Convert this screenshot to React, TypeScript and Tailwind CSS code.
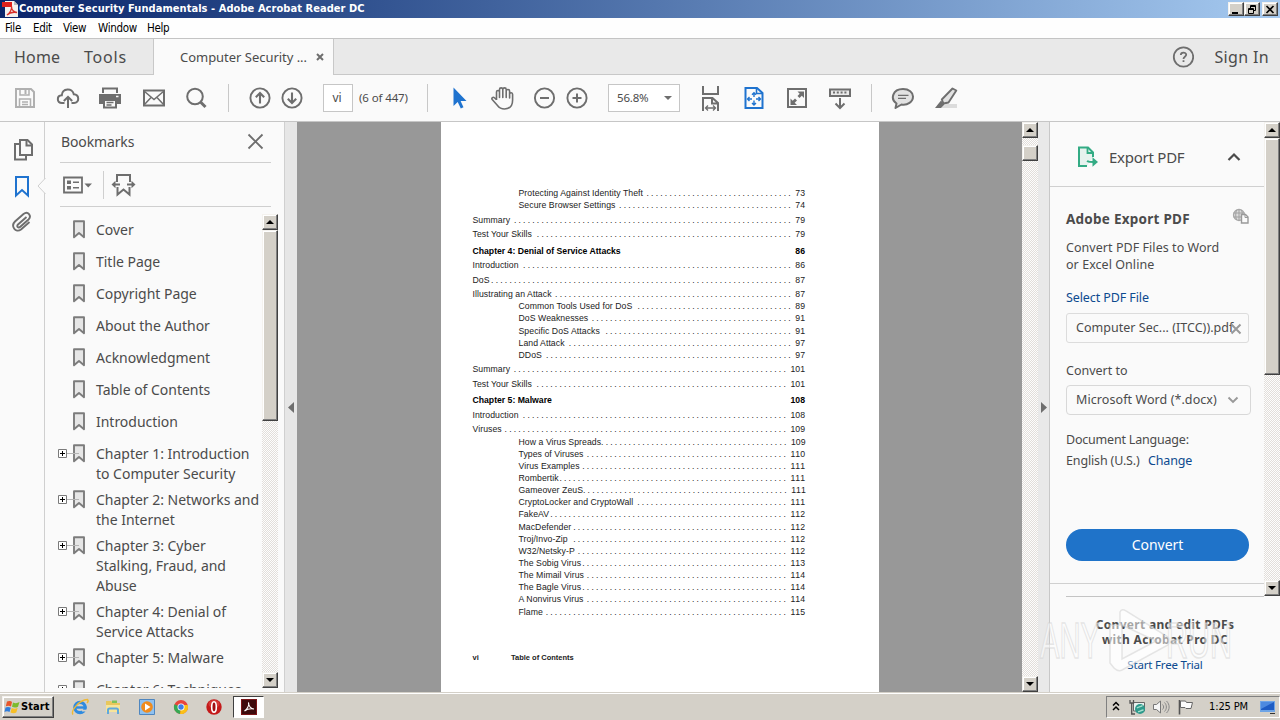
import type { ReactNode } from "react";

const INK = "#6e6e6e";

function Icon({ children, className = "", w = 24, h = 24 }: { children: ReactNode; className?: string; w?: number; h?: number }) {
  return (
    <svg width={w} height={h} viewBox={`0 0 ${w} ${h}`} fill="none" className={`shrink-0 ${className}`}>
      {children}
    </svg>
  );
}

/* ---------- Classic scrollbar ---------- */
const TRACK = "bg-[#f1efec] bg-[repeating-conic-gradient(#e2deda_0_25%,#fdfdfd_0_50%)] bg-[length:2px_2px]";
const RAISED = "bg-[#d4d0c8] border border-t-[#f4f2ee] border-l-[#f4f2ee] border-r-[#404040] border-b-[#404040] shadow-[inset_-1px_-1px_0_#808080,inset_1px_1px_0_#ffffff]";

function ScrollButton({ up = false }: { up?: boolean }) {
  return (
    <div className={`flex h-4 w-4 shrink-0 items-center justify-center ${RAISED}`}>
      <Icon w={8} h={4}>
        <path d={up ? "M0 4L4 0L8 4Z" : "M0 0L4 4L8 0Z"} fill="#000" />
      </Icon>
    </div>
  );
}

function Scrollbar({ thumb, className = "" }: { thumb: string; className?: string }) {
  return (
    <div className={`flex w-4 shrink-0 flex-col ${TRACK} ${className}`}>
      <ScrollButton up />
      <div className={`w-4 shrink-0 ${RAISED} ${thumb}`} />
      <div className="flex-1" />
      <ScrollButton />
    </div>
  );
}

/* ---------- Title, menu, tabs ---------- */
function WindowButton({ children, className = "" }: { children: ReactNode; className?: string }) {
  return (
    <div className={`flex h-[14px] w-4 items-center justify-center ${RAISED} ${className}`}>
      <Icon w={10} h={9}>{children}</Icon>
    </div>
  );
}

function TitleBar() {
  return (
    <div className="flex h-[18px] items-center bg-linear-to-r from-[#0a246a] to-[#a6caf0] pr-[2px] pl-[2px]">
      <Icon w={16} h={16}>
        <path d="M3 0H12L16 4V16H3Z" fill="#f3f0ee" />
        <path d="M12 0L16 4H12Z" fill="#b9b9b9" />
        <path d="M0 1H10V6H0Z" fill="#e0201b" />
        <path d="M5 14C8 12 10 8 9.500 5.500C9.500 9 12 11.500 15 11.500C11 10.800 7.500 11.500 5 14Z" stroke="#d9302a" strokeWidth="1.300" />
      </Icon>
      <span className="ml-px pt-px font-['DejaVu_Sans_Condensed','DejaVu_Sans',sans-serif] text-[11px] font-bold tracking-[0.06px] whitespace-nowrap text-white">
        Computer Security Fundamentals - Adobe Acrobat Reader DC
      </span>
      <div className="ml-auto flex">
        <WindowButton><path d="M1 7H7V9H1Z" fill="#000" /></WindowButton>
        <WindowButton>
          <path d="M3.500 3V0.500H8.500V5.500H6.500M3 1.500H9M1.500 3.500H6.500V8.500H1.500ZM1 4.500H7" stroke="#000" />
        </WindowButton>
        <WindowButton className="ml-[2px]"><path d="M1.500 1L8.500 8M8.500 1L1.500 8" stroke="#000" strokeWidth="1.700" /></WindowButton>
      </div>
    </div>
  );
}

function MenuBar() {
  return (
    <div className="flex h-5 items-center bg-[#fefefe] pt-px pl-[5px] font-['DejaVu_Sans_Condensed','DejaVu_Sans',sans-serif] text-[11.500px] tracking-[-0.32px] text-black">
      <span className="w-[28px]">File</span>
      <span className="w-[30px]">Edit</span>
      <span className="w-[35px]">View</span>
      <span className="w-[49px]">Window</span>
      <span>Help</span>
    </div>
  );
}

function TabBar() {
  return (
    <div className="flex h-[37px] border-t border-[#c4c4c4] bg-[#e9e9e9] text-[#4b4b4b]">
      <div className="flex w-[154px] items-center border-r border-b border-[#c8c8c8] pl-[14px] text-base">
        <span className="w-[70px] tracking-[0.2px]">Home</span>
        <span className="tracking-[0.8px]">Tools</span>
      </div>
      <div className="flex w-[180px] items-center border-r border-[#c8c8c8] bg-[#fafafa] pl-[26px]">
        <span className="w-[136px] pt-px text-[13px] tracking-[-0.03px] whitespace-nowrap">Computer Security ...</span>
        <Icon w={8} h={8}><path d="M1 1L7 7M7 1L1 7" stroke={INK} strokeWidth="2" /></Icon>
      </div>
      <div className="flex flex-1 items-center justify-end border-b border-[#c8c8c8] pr-[11px]">
        <Icon w={22} h={22}>
          <circle cx="11.500" cy="11" r="9.700" stroke={INK} strokeWidth="1.800" />
          <path d="M8.800 9C8.800 5.800 14.200 5.800 14.200 8.800C14.200 10.700 11.500 10.900 11.500 12.900M11.500 14.300V16" stroke={INK} strokeWidth="1.800" />
        </Icon>
        <span className="ml-5 text-base tracking-[0.35px] whitespace-nowrap">Sign In</span>
      </div>
    </div>
  );
}

/* ---------- Toolbar ---------- */
const Sep = ({ className }: { className: string }) => <div className={`h-7 w-px shrink-0 bg-[#c8c8c8] ${className}`} />;

function Toolbar() {
  return (
    <div className="flex h-[47px] items-center border-b border-[#c6c6c6] bg-[#fafafa] text-[#4b4b4b]">
      <Icon className="ml-[13px]">
        <path d="M3 3H18L21 6V21H3Z" stroke="#b0b0b0" strokeWidth="2" />
        <path d="M7 3V9H16V3M6.500 21V13H17.500V21M9 16H15M9 18.500H15" stroke="#b0b0b0" strokeWidth="1.500" />
        <path d="M12.500 4V8" stroke="#b0b0b0" strokeWidth="2" />
      </Icon>
      <Icon className="ml-[19px]">
        <path d="M8.500 17H6C0.500 17 0.500 9.500 5.800 9.300C6.300 1.800 16.500 1.500 17.800 8.300C23.500 8.500 23.800 17 18 17H15.500" stroke={INK} strokeWidth="2" />
        <path d="M12 22V11.500M7.800 15L12 11L16.200 15" stroke={INK} strokeWidth="2" />
      </Icon>
      <Icon className="ml-[18px]">
        <path d="M4 1.500H20V7H4Z" fill={INK} /><path d="M6 3.500H18V7H6Z" fill="#fafafa" />
        <path d="M1 8H23V18H19V14H5V18H1Z" fill={INK} />
        <path d="M6 14H18V21.500H6Z" fill="#fafafa" stroke={INK} strokeWidth="2" />
        <path d="M8.500 16.500H15.500M8.500 19H13.500" stroke={INK} strokeWidth="1.300" />
        <path d="M18 10.500H20.500" stroke="#fafafa" strokeWidth="1.500" />
      </Icon>
      <Icon className="ml-[20px]">
        <path d="M2 4.500H22V19.500H2Z" stroke={INK} strokeWidth="2" />
        <path d="M2 5L12 13.500L22 5M2 19L9 11.500M22 19L15 11.500" stroke={INK} strokeWidth="1.500" />
      </Icon>
      <Icon className="ml-[18px]">
        <circle cx="11" cy="10.500" r="7.800" stroke={INK} strokeWidth="2" />
        <path d="M16.500 16L21.500 21" stroke={INK} strokeWidth="3" />
      </Icon>
      <Sep className="ml-[20px]" />
      <Icon className="ml-[19px]">
        <circle cx="12" cy="12" r="9.600" stroke={INK} strokeWidth="1.900" />
        <path d="M12 17.500V7.500M7.800 11.200L12 7L16.200 11.200" stroke={INK} strokeWidth="2.100" />
      </Icon>
      <Icon className="ml-[8px]">
        <circle cx="12" cy="12" r="9.600" stroke={INK} strokeWidth="1.900" />
        <path d="M12 6.500V16.500M7.800 12.800L12 17L16.200 12.800" stroke={INK} strokeWidth="2.100" />
      </Icon>
      <div className="ml-[19px] flex h-[28px] w-[30px] shrink-0 items-center justify-center border border-[#c6c6c6] bg-white pr-[2px] text-[12px]">vi</div>
      <span className="ml-[6px] w-[50px] shrink-0 text-[11.500px] tracking-[-0.12px] whitespace-nowrap">(6 of 447)</span>
      <Sep className="ml-[18px]" />
      <Icon className="ml-[20px]"><path d="M5.500 1.500V20L9.700 16L12.800 22.500L15.500 21.300L12.600 15H18.500Z" fill="#1f73cf" /></Icon>
      <Icon className="ml-[18px]">
        <path d="M6.500 14V6C6.500 4 9.500 4 9.500 6V11.500V3.500C9.500 1.300 12.800 1.300 12.800 3.500V11.500V3.500C12.800 1.300 16.200 1.300 16.200 3.500V11.500V5C16.200 3 19.600 3 19.600 5V12V8C20 6.300 22.600 6.300 22.600 8.500V14C22.600 20 20 23 14.500 23C10.500 23 9 21.500 7.500 19.500L2.200 13.500C1.200 11.800 3 10.500 4.700 12L6.500 13.800" stroke={INK} strokeWidth="1.600" strokeLinejoin="round" />
      </Icon>
      <Icon className="ml-[18px]">
        <circle cx="12.500" cy="12" r="9.600" stroke={INK} strokeWidth="1.900" /><path d="M8 12H17" stroke={INK} strokeWidth="2" />
      </Icon>
      <Icon className="ml-[9px]">
        <circle cx="12" cy="12" r="9.600" stroke={INK} strokeWidth="1.900" /><path d="M7.500 12H16.500M12 7.500V16.500" stroke={INK} strokeWidth="2" />
      </Icon>
      <div className="ml-[19px] flex h-[28px] w-[72px] shrink-0 items-center justify-between border border-[#c6c6c6] bg-white pr-[7px] pl-[8px]">
        <span className="text-[11.500px] tracking-[-0.2px]">56.8%</span>
        <Icon w={8} h={4}><path d="M0 0H8L4 4Z" fill={INK} /></Icon>
      </div>
      <Icon className="ml-[19px]" h={26}>
        <path d="M4 1V9H19V1" stroke={INK} strokeWidth="2" />
        <path d="M4 26V13H13.500L19 18V26M13 13V18.500H19" stroke={INK} strokeWidth="2" />
        <path d="M6.500 23H16.500M9 20.500L6.500 23L9 25.500M14 20.500L16.500 23L14 25.500" stroke={INK} strokeWidth="1.300" />
      </Icon>
      <Icon className="ml-[19px]">
        <path d="M3.500 2H15L20.500 7V22H3.500Z" stroke="#1f73cf" strokeWidth="2" />
        <path d="M14.500 2V7.500H20.500" stroke="#1f73cf" strokeWidth="1.600" />
        <path d="M12 7V11M12 14.500V18.500M5.500 13H10M14 13H18.500M10 8.800L12 6.800L14 8.800M10 17L12 19L14 17M7.500 11L5.500 13L7.500 15M16.500 11L18.500 13L16.500 15" stroke="#1f73cf" strokeWidth="1.400" />
      </Icon>
      <Icon className="ml-[19px]">
        <path d="M3 3H21V21H3Z" stroke={INK} strokeWidth="2" />
        <path d="M12.500 5.500H19V12L16.800 9.800L14.500 12L12.500 10L14.700 7.700ZM5.500 12.500L7.700 14.700L10 12.500L12 14.500L9.700 16.800L12 19H5.500Z" fill={INK} />
      </Icon>
      <Icon className="ml-[19px]">
        <path d="M2 3.500H22V10H2Z" fill="#e8e8e8" stroke={INK} strokeWidth="2" />
        <path d="M5 6.500H19" stroke={INK} strokeWidth="2" strokeDasharray="2 1.800" />
        <path d="M12 12V22M7.500 17.500L12 22L16.500 17.500" stroke={INK} strokeWidth="2" />
      </Icon>
      <Sep className="ml-[19px]" />
      <Icon className="ml-[19px]">
        <path d="M5.500 17.500C-1 13 1.500 3 12 3C18 3 22 6.500 22 10.500C22 16 16.500 19.500 10.500 18.500L4.500 22Z" fill="#e2e2e2" stroke={INK} strokeWidth="2" strokeLinejoin="round" />
        <path d="M7 9.300H17.500M7 12.300H15" stroke={INK} strokeWidth="1.300" />
      </Icon>
      <Icon className="ml-[19px]">
        <path d="M12 18H23V22H7Z" fill="#dcdcdc" />
        <path d="M18.500 2.500L22.300 4.500L14.500 16.500L9.500 17.500L7.800 13.500Z" fill="#e2e2e2" stroke={INK} strokeWidth="1.900" strokeLinejoin="round" />
        <path d="M7 14.500L10.500 18.500L7 22H1Z" fill={INK} />
      </Icon>
    </div>
  );
}

/* ---------- Bookmarks ---------- */
type Bookmark = { lines: string[]; branch?: boolean };
const BOOKMARKS: Bookmark[] = [
  { lines: ["Cover"] },
  { lines: ["Title Page"] },
  { lines: ["Copyright Page"] },
  { lines: ["About the Author"] },
  { lines: ["Acknowledgment"] },
  { lines: ["Table of Contents"] },
  { lines: ["Introduction"] },
  { lines: ["Chapter 1: Introduction", "to Computer Security"], branch: true },
  { lines: ["Chapter 2: Networks and", "the Internet"], branch: true },
  { lines: ["Chapter 3: Cyber", "Stalking, Fraud, and", "Abuse"], branch: true },
  { lines: ["Chapter 4: Denial of", "Service Attacks"], branch: true },
  { lines: ["Chapter 5: Malware"], branch: true },
  { lines: ["Chapter 6: Techniques"], branch: true },
];

function BookmarkRow({ lines, branch }: Bookmark) {
  return (
    <div className="flex min-h-8 shrink-0 pt-[3px] pb-[3px] pl-[12px]">
      <Icon w={28} h={20}>
        {branch && (
          <>
            <path d="M10 9.500H20" stroke="#b5b5b5" />
            <path d="M1.500 5.500H9.500V13.500H1.500Z" fill="#fff" stroke="#7a7a7a" />
            <path d="M3 9.500H8M5.500 7V12" stroke="#000" />
          </>
        )}
        <path d="M17 1.300H27V17.300L22 13L17 17.300Z" fill="#e6e6e6" stroke="#7c7c7c" strokeWidth="1.900" strokeLinejoin="round" />
        {branch && <path d="M16 9.500H22" stroke="#b5b5b5" />}
      </Icon>
      <div className="ml-[11px] text-[14px] leading-5 tracking-[-0.02px] whitespace-nowrap">
        {lines.map((l) => <div key={l}>{l}</div>)}
      </div>
    </div>
  );
}

function LeftRail() {
  return (
    <div className="flex w-[45px] shrink-0 flex-col border-r border-[#cfcfcf] bg-[#fafafa]">
      <Icon w={24} h={24} className="mt-[16px] ml-[12px]">
        <path d="M8 2H15.500L20 6.500V17H8Z" stroke={INK} strokeWidth="2" />
        <path d="M14.500 2V7.500H20M8 6H3V21.500H14V18" stroke={INK} strokeWidth="2" />
      </Icon>
      <div className="mt-[12px] flex h-6 items-center pl-[12px]">
        <Icon><path d="M4 3H16V21.500L10 16L4 21.500Z" stroke="#1f73cf" strokeWidth="2" /></Icon>
        <Icon w={9} h={16} className="relative left-px"><path d="M8.500 0L1 8L8.500 16" fill="#fafafa" stroke="#cfcfcf" /></Icon>
      </div>
      <Icon className="mt-[12px] ml-[10px]">
        <path d="M16.500 7L8 14.500C6 16.500 8.500 18.500 10.300 16.800L18.500 9.500C22 6 18 0.500 13.500 4L5 11.500C0.500 16 5.500 23.500 11 19.500L19.500 12" stroke={INK} strokeWidth="1.900" />
      </Icon>
    </div>
  );
}

function BookmarksPanel() {
  return (
    <div className="flex w-[239px] shrink-0 flex-col bg-[#fafafa] text-[#4b4b4b]">
      <div className="mr-[13px] ml-[15px] flex h-[41px] shrink-0 items-center justify-between border-b border-[#cfcfcf] pr-[7px] pb-[2px] pl-px">
        <span className="text-[14px] tracking-[-0.13px]">Bookmarks</span>
        <Icon w={17} h={17}><path d="M1.500 1.500L15.500 15.500M15.500 1.500L1.500 15.500" stroke={INK} strokeWidth="1.800" /></Icon>
      </div>
      <div className="mr-[13px] ml-[15px] flex h-[44px] shrink-0 items-center border-b border-[#cfcfcf]">
        <Icon w={34} h={20} className="ml-[2px]">
          <path d="M2 2.500H20V17.500H2Z" stroke={INK} strokeWidth="1.800" />
          <path d="M5 5.500H9V9H5ZM5 11H9V14.500H5Z" fill={INK} />
          <path d="M11 7.300H17M11 12.700H17" stroke={INK} strokeWidth="1.600" />
          <path d="M22.500 8.500H30L26.200 12.500Z" fill={INK} />
        </Icon>
        <div className="ml-[7px] h-7 w-px bg-[#cfcfcf]" />
        <Icon className="ml-[7px]" w={25} h={24}>
          <path d="M6 9V2H19V9M6.500 14V21.500L12.500 16.500L18.500 21.500V14" stroke={INK} strokeWidth="2" />
          <path d="M2 11.500H9M16 11.500H23" stroke={INK} strokeWidth="2" />
          <path d="M0.500 11.500L4.500 7.800V15.200ZM24.500 11.500L20.500 7.800V15.200Z" fill={INK} />
        </Icon>
      </div>
      <div className="mt-[7px] mb-[4px] flex min-h-0 flex-1">
        <div className="flex w-[217px] flex-col overflow-hidden pt-[3px]">
          {BOOKMARKS.map((b) => <BookmarkRow key={b.lines[0]} {...b} />)}
        </div>
        <Scrollbar thumb="h-[191px]" />
      </div>
    </div>
  );
}

/* ---------- Document ---------- */
type Entry = { gap: string; text: string; page: string; start?: number; sub?: boolean };
const e = (gap: string, text: string, page: string, start?: number, sub = false): Entry => ({ gap, text, page, start, sub });
const ENTRIES: Entry[] = [
  e("mt-0", "Protecting Against Identity Theft", "73", 647, true),
  e("mt-0", "Secure Browser Settings", "74", 619, true),
  e("mt-[3px]", "Summary", "79", 514),
  e("mt-[2px]", "Test Your Skills", "79", 537),
  e("mt-[5px]", "Chapter 4: Denial of Service Attacks", "86"),
  e("mt-[2px]", "Introduction", "86", 523),
  e("mt-[3px]", "DoS", "87", 491),
  e("mt-[2px]", "Illustrating an Attack", "87", 555),
  e("mt-0", "Common Tools Used for DoS", "89", 638, true),
  e("mt-0", "DoS Weaknesses", "91", 592, true),
  e("mt-px", "Specific DoS Attacks", "91", 605.500, true),
  e("mt-0", "Land Attack", "97", 569, true),
  e("mt-0", "DDoS", "97", 546, true),
  e("mt-[2px]", "Summary", "101", 514),
  e("mt-[3px]", "Test Your Skills", "101", 537),
  e("mt-[4px]", "Chapter 5: Malware", "108"),
  e("mt-[3px]", "Introduction", "108", 523),
  e("mt-[2px]", "Viruses", "109", 505),
  e("mt-px", "How a Virus Spreads", "109", 601, true),
  e("mt-0", "Types of Viruses", "110", 587, true),
  e("mt-0", "Virus Examples", "111", 583, true),
  e("mt-0", "Rombertik", "111", 560, true),
  e("mt-0", "Gameover ZeuS", "111", 583, true),
  e("mt-0", "CryptoLocker and CryptoWall", "111", 638, true),
  e("mt-0", "FakeAV", "112", 550.500, true),
  e("mt-px", "MacDefender", "112", 573.500, true),
  e("mt-0", "Troj/Invo-Zip", "112", 573.500, true),
  e("mt-0", "W32/Netsky-P", "112", 578, true),
  e("mt-0", "The Sobig Virus", "113", 583, true),
  e("mt-0", "The Mimail Virus", "114", 587, true),
  e("mt-0", "The Bagle Virus", "114", 583, true),
  e("mt-0", "A Nonvirus Virus", "114", 587, true),
  e("mt-px", "Flame", "115", 546, true),
];

function TocRow({ gap, text, page, start, sub }: Entry) {
  const last = page.length === 2 ? 790 : 785.5;
  const dots = start ? ".".repeat(Math.round((last - start) / 4.57) + 1) : "";
  return (
    <div className={`flex h-3 items-center whitespace-nowrap ${gap} ${start ? "" : "font-bold text-black"}`}>
      <span className={sub ? "ml-[46px] tracking-[0.06px]" : start ? "tracking-[0.06px]" : "tracking-[-0.02px]"}>{text}</span>
      <span className="mr-[2.500px] ml-auto text-[8.500px] tracking-[2.210px]">{dots}</span>
      <span className="text-[8.700px] [font-kerning:none]">{page}</span>
    </div>
  );
}

function DocumentView() {
  return (
    <div className="flex w-[725px] shrink-0 bg-[#989898] pl-[143.500px]">
      <div className="flex w-[438px] flex-col bg-white pt-[65px] pl-[32px] font-['Liberation_Sans',Arial,sans-serif] text-[8.700px] leading-3 text-[#222]">
        <div className="flex w-[332.500px] flex-col">
          {ENTRIES.map((x, i) => <TocRow key={i} {...x} />)}
        </div>
        <div className="mt-[34px] flex h-3 items-center text-[7.500px] font-bold">
          <span className="w-[38.500px]">vi</span>
          <span>Table of Contents</span>
        </div>
      </div>
    </div>
  );
}

/* ---------- Export panel ---------- */
function ExportPanel() {
  return (
    <div className="flex w-[230px] shrink-0 flex-col bg-[#fafafa] text-[#4b4b4b]">
      <div className="flex h-[474px]">
        <div className="flex w-[214px] flex-col text-[12.500px]">
          <div className="flex h-[65px] shrink-0 items-center border-b border-[#d0d0d0] pt-[6px] pl-[26px]">
            <Icon w={24} h={24}>
              <path d="M11 21H3V2.500H12L17 7.500V12" fill="#e6f2ee" stroke="#33ab84" strokeWidth="2" />
              <path d="M11.500 2.500V8H17" stroke="#33ab84" strokeWidth="1.800" />
              <path d="M11 16C12.500 17 14 17 18 17" stroke="#33ab84" strokeWidth="2" />
              <path d="M16.500 12.300L22 17L16.500 21.700Z" fill="#33ab84" />
            </Icon>
            <span className="ml-[9px] w-[118px] text-[15px] tracking-[-0.25px]">Export PDF</span>
            <Icon w={14} h={10}><path d="M1.500 8L7 2.500L12.500 8" stroke="#4b4b4b" strokeWidth="2.200" /></Icon>
          </div>
          <div className="flex flex-col pr-[14px] pl-4">
            <div className="mt-[20px] flex h-6 items-center">
              <span className="w-[166px] text-[13.500px] font-bold tracking-[0.25px]">Adobe Export PDF</span>
              <Icon w={18} h={18} className="mb-[4px]">
                <circle cx="7" cy="7" r="5.500" fill="#dcdcdc" stroke="#a8a8a8" strokeWidth="1.300" />
                <path d="M1.500 5H12.500M1.500 9H12.500M7 1.500V12.500M4.500 2C3.500 5 3.500 9 4.500 12M9.500 2C10.500 5 10.500 7 10 9" stroke="#a0a0a0" />
                <path d="M9.500 6.500H13.500L16 9V15H9.500Z" fill="#fafafa" stroke="#999" strokeWidth="1.400" />
                <path d="M13 6.500V9.500H16" stroke="#999" />
              </Icon>
            </div>
            <div className="mt-[8px] leading-[17px] tracking-[0.05px] whitespace-nowrap">
              <div>Convert PDF Files to Word</div>
              <div>or Excel Online</div>
            </div>
            <div className="mt-[16px] h-[17px] leading-[17px] tracking-[-0.1px] text-[#0d4a8f]">Select PDF File</div>
            <div className="mt-[7px] flex h-[30px] w-[183px] items-center rounded-[3px] border border-[#dcdcdc] pt-px pl-[9px]">
              <span className="w-[155px] tracking-[0.03px] whitespace-nowrap">Computer Sec... (ITCC)).pdf</span>
              <Icon w={12} h={12} className="-ml-px"><path d="M1.500 1.500L10.500 10.500M10.500 1.500L1.500 10.500" stroke="#999" strokeWidth="2" /></Icon>
            </div>
            <div className="mt-[19px] h-[17px] leading-[17px]">Convert to</div>
            <div className="mt-[6px] flex h-[30px] w-[185px] items-center rounded-[4px] border border-[#d8d8d8] pt-px pl-[9px]">
              <span className="w-[151px] tracking-[0.08px] whitespace-nowrap">Microsoft Word (*.docx)</span>
              <Icon w={12} h={8} className="mb-[2px]"><path d="M1.500 1.500L6 6L10.500 1.500" stroke="#999" strokeWidth="1.900" /></Icon>
            </div>
            <div className="mt-[16px] h-[17px] leading-[17px] tracking-[-0.2px]">Document Language:</div>
            <div className="mt-[4px] flex h-[17px] leading-[17px]">
              <span className="w-[82px] tracking-[-0.15px]">English (U.S.)</span>
              <span className="tracking-[-0.15px] text-[#0d4a8f]">Change</span>
            </div>
            <div className="mt-[60px] flex h-8 w-[183px] items-center justify-center rounded-full bg-[#1f73c9] pb-px text-[14px] tracking-[-0.05px] text-white">Convert</div>
          </div>
          <div className="mt-[22px] h-px shrink-0 bg-[#d0d0d0]" />
        </div>
        <Scrollbar thumb="h-[237px]" />
      </div>
      <div className="relative flex flex-1 flex-col">
        <div className="mr-4 ml-4 h-px bg-[#c4c4c4]" />
        <div className="mt-[20px] text-center text-[12px] leading-[15px] font-bold tracking-[0.32px]">
          <div>Convert and edit PDFs</div>
          <div>with Acrobat Pro DC</div>
        </div>
        <div className="mt-[9px] text-center text-[11.500px] leading-[17px] tracking-[-0.18px] text-[#0d4a8f]">Start Free Trial</div>
        <svg width="204" height="76" viewBox="0 0 204 76" className="absolute top-[9px] -left-[16px]" fill="#fff" fillOpacity="0.5" stroke="#d2d2d2" strokeOpacity="0.55" strokeWidth="1.500">
          <text x="6" y="53" fontSize="50" fontFamily="Liberation Sans, sans-serif" textLength="60" lengthAdjust="spacingAndGlyphs">ANY</text>
          <path fillRule="evenodd" d="M76 20L86 20L86 7Q88 3 92 6L134 32Q138 36 134 40L88 65Q84 67 80 63L76 58ZM88 20V54L122 36Z" />
          <text x="132" y="53" fontSize="50" fontFamily="Liberation Sans, sans-serif" textLength="66" lengthAdjust="spacingAndGlyphs">RUN</text>
        </svg>
      </div>
    </div>
  );
}

/* ---------- Taskbar ---------- */
function Taskbar() {
  return (
    <div className="flex h-7 shrink-0 items-center border-t border-[#d4d0c8] bg-[#d4d0c8] pt-px shadow-[inset_0_1px_0_#ffffff]">
      <div className={`ml-[2px] flex h-[22px] w-[52px] items-center ${RAISED}`}>
        <Icon w={17} h={16} className="ml-px">
          <path d="M3 2.500C5 1.500 7 2 8 3L7 7.500C5.500 6.500 3.500 6.500 1.800 7.300Z" fill="#e8562a" />
          <path d="M9 3.500C11 4.500 13.500 4.300 15.500 3L14 7.700C12 8.800 10 8.800 8 7.800Z" fill="#7cbb2c" />
          <path d="M1.500 8.500C3.500 7.500 5.200 7.800 6.800 8.700L5.500 13C4 12 2 12 0.500 13Z" fill="#2f7ddc" />
          <path d="M7.700 9C9.700 10 11.700 10 13.700 8.800L12.300 13.500C10.300 14.600 8.300 14.300 6.500 13.400Z" fill="#f7bf26" />
        </Icon>
        <span className="pt-px font-['DejaVu_Sans_Condensed','DejaVu_Sans',sans-serif] text-[11px] font-bold tracking-[0.1px] text-black">Start</span>
      </div>
      <Icon w={18} h={18} className="ml-[17px]">
        <circle cx="9" cy="9.500" r="5.200" stroke="#2f8be0" strokeWidth="3.200" />
        <path d="M5 9.500H15.500" stroke="#2f8be0" strokeWidth="2.400" />
        <path d="M11 11.700H17V13.500H11Z" fill="#d4d0c8" />
        <path d="M2 16.500C-0.500 13 8 2 16.500 1.500C17.500 2.500 17 4 16 5" stroke="#f0b932" strokeWidth="1.400" />
      </Icon>
      <Icon w={18} h={18} className="ml-[15px]">
        <path d="M2 3H7L9 5H16V14H2Z" fill="#e8c75c" /><path d="M2 7H16V14H2Z" fill="#f7e49a" />
        <path d="M8 2.500H13V5H8Z" fill="#7cc25c" />
        <path d="M4 16V12Q4 10.500 5.500 10.500H12.500Q14 10.500 14 12V16" stroke="#5fa9dc" strokeWidth="2" />
      </Icon>
      <Icon w={18} h={18} className="ml-[16px]">
        <path d="M1.500 1.500H16.500V16.500H1.500Z" fill="#8fc1f0" stroke="#4f86bf" />
        <circle cx="9" cy="9" r="5.800" fill="#f08b1d" /><path d="M7 5.500L12.500 9L7 12.500Z" fill="#fff" />
      </Icon>
      <Icon w={18} h={18} className="ml-[16px]">
        <circle cx="9" cy="9" r="7" fill="#e8453c" />
        <path d="M9 9L2.500 6.200A7 7 0 0 0 8 16Z" fill="#37a853" />
        <path d="M9 9L8 16A7 7 0 0 0 15.700 7H9Z" fill="#fbc116" />
        <circle cx="9" cy="9" r="3.500" fill="#fff" /><circle cx="9" cy="9" r="2.700" fill="#3e7de8" />
      </Icon>
      <Icon w={18} h={18} className="ml-[15px]">
        <circle cx="9" cy="9" r="7.700" fill="#c41a1a" /><ellipse cx="9" cy="6" rx="5.500" ry="4" fill="#e2504b" fillOpacity="0.6" />
        <ellipse cx="9" cy="9" rx="2.300" ry="5.200" fill="#a10f12" stroke="#fff" strokeWidth="1.600" />
      </Icon>
      <div className="ml-[10px] flex h-[22px] w-[31px] items-center justify-center border border-t-[#404040] border-r-white border-b-white border-l-[#404040] bg-white">
        <Icon w={16} h={16}>
          <path d="M0 0H16V16H0Z" fill="#7a1416" /><path d="M1 1H15V15H1Z" fill="#3e0a0b" />
          <path d="M3.500 12C6 10.500 8.500 6.500 7.500 3.500C7.500 7 10 10 13 10C9.500 9.500 6 10 3.500 12Z" stroke="#fff" strokeWidth="1.100" />
        </Icon>
      </div>
      <div className="ml-auto flex h-[22px] w-[174px] items-center border border-t-[#808080] border-r-white border-b-white border-l-[#808080] pl-[5px]">
        <Icon w={8} h={10} className="mb-[2px]"><path d="M1 4.500L4 1.500L7 4.500M1 9L4 6L7 9" stroke="#000" strokeWidth="1.500" /></Icon>
        <Icon w={17} h={16} className="ml-[9px]">
          <path d="M4.500 3.500H15.500V12H4.500Z" fill="#e8f1ef" stroke="#666" />
          <path d="M1 1V4H4.500V1M2.700 4V15H6" stroke="#555" strokeWidth="1.300" />
          <circle cx="11" cy="10" r="5" fill="#2e9a8c" /><path d="M8 9C10 7 12 8 13.500 6.500M9 12.500C11 13 12 11 14.500 11" stroke="#a8e0cf" strokeWidth="1.300" />
        </Icon>
        <Icon w={18} h={16} className="ml-[6px]">
          <path d="M1.500 5.500H4.500L8.500 2V14L4.500 10.500H1.500Z" fill="#f6f6f6" stroke="#777" />
          <path d="M10.500 5.500C12 7 12 9 10.500 10.500M12.500 3.500C15 6 15 10 12.500 12.500M14.500 2C18 5.500 18 10.500 14.500 14" stroke="#888" />
        </Icon>
        <Icon w={17} h={16} className="ml-[7px]">
          <path d="M2.500 1V15.500" stroke="#555" strokeWidth="1.600" />
          <path d="M3.500 2H8.500L9.500 3.500H15.500L14 9.500H9L8 8.500H3.500Z" fill="#fcfcfc" stroke="#666" />
        </Icon>
        <span className="ml-[15px] pt-px font-['DejaVu_Sans_Condensed','DejaVu_Sans',sans-serif] text-[11px] tracking-[-0.12px] whitespace-nowrap text-black">1:25 PM</span>
        <Icon w={16} h={15} className="ml-[12px]">
          <path d="M0 1H15V12H0Z" fill="#6ea4e6" /><path d="M1 2H14V10H1Z" fill="#1e5cc4" /><path d="M1 2H14L1 9Z" fill="#4d8ae0" />
          <path d="M10 13.500H15" stroke="#333" />
        </Icon>
      </div>
    </div>
  );
}

export default function App() {
  return (
    <div className="flex h-[720px] w-[1280px] flex-col overflow-hidden bg-[#fafafa] font-['Noto_Sans',sans-serif]">
      <TitleBar />
      <MenuBar />
      <TabBar />
      <Toolbar />
      <div className="flex min-h-0 flex-1">
        <LeftRail />
        <BookmarksPanel />
        <div className="flex w-[13px] shrink-0 items-center border-l border-[#d0d0d0] bg-[#e6e6e6] pl-[3px]">
          <Icon w={7} h={11}><path d="M6 0V11L0 5.500Z" fill={INK} /></Icon>
        </div>
        <DocumentView />
        <div className={`flex w-4 shrink-0 flex-col ${TRACK}`}>
          <ScrollButton up />
          <div className={`mt-[7px] h-4 w-4 shrink-0 ${RAISED}`} />
          <div className="mt-auto"><ScrollButton /></div>
        </div>
        <div className="flex w-[12px] shrink-0 items-center border-r border-[#c8c8c8] bg-[#e9e9e9] pl-[2px]">
          <Icon w={7} h={11}><path d="M1 0V11L7 5.500Z" fill={INK} /></Icon>
        </div>
        <ExportPanel />
      </div>
      <Taskbar />
    </div>
  );
}
